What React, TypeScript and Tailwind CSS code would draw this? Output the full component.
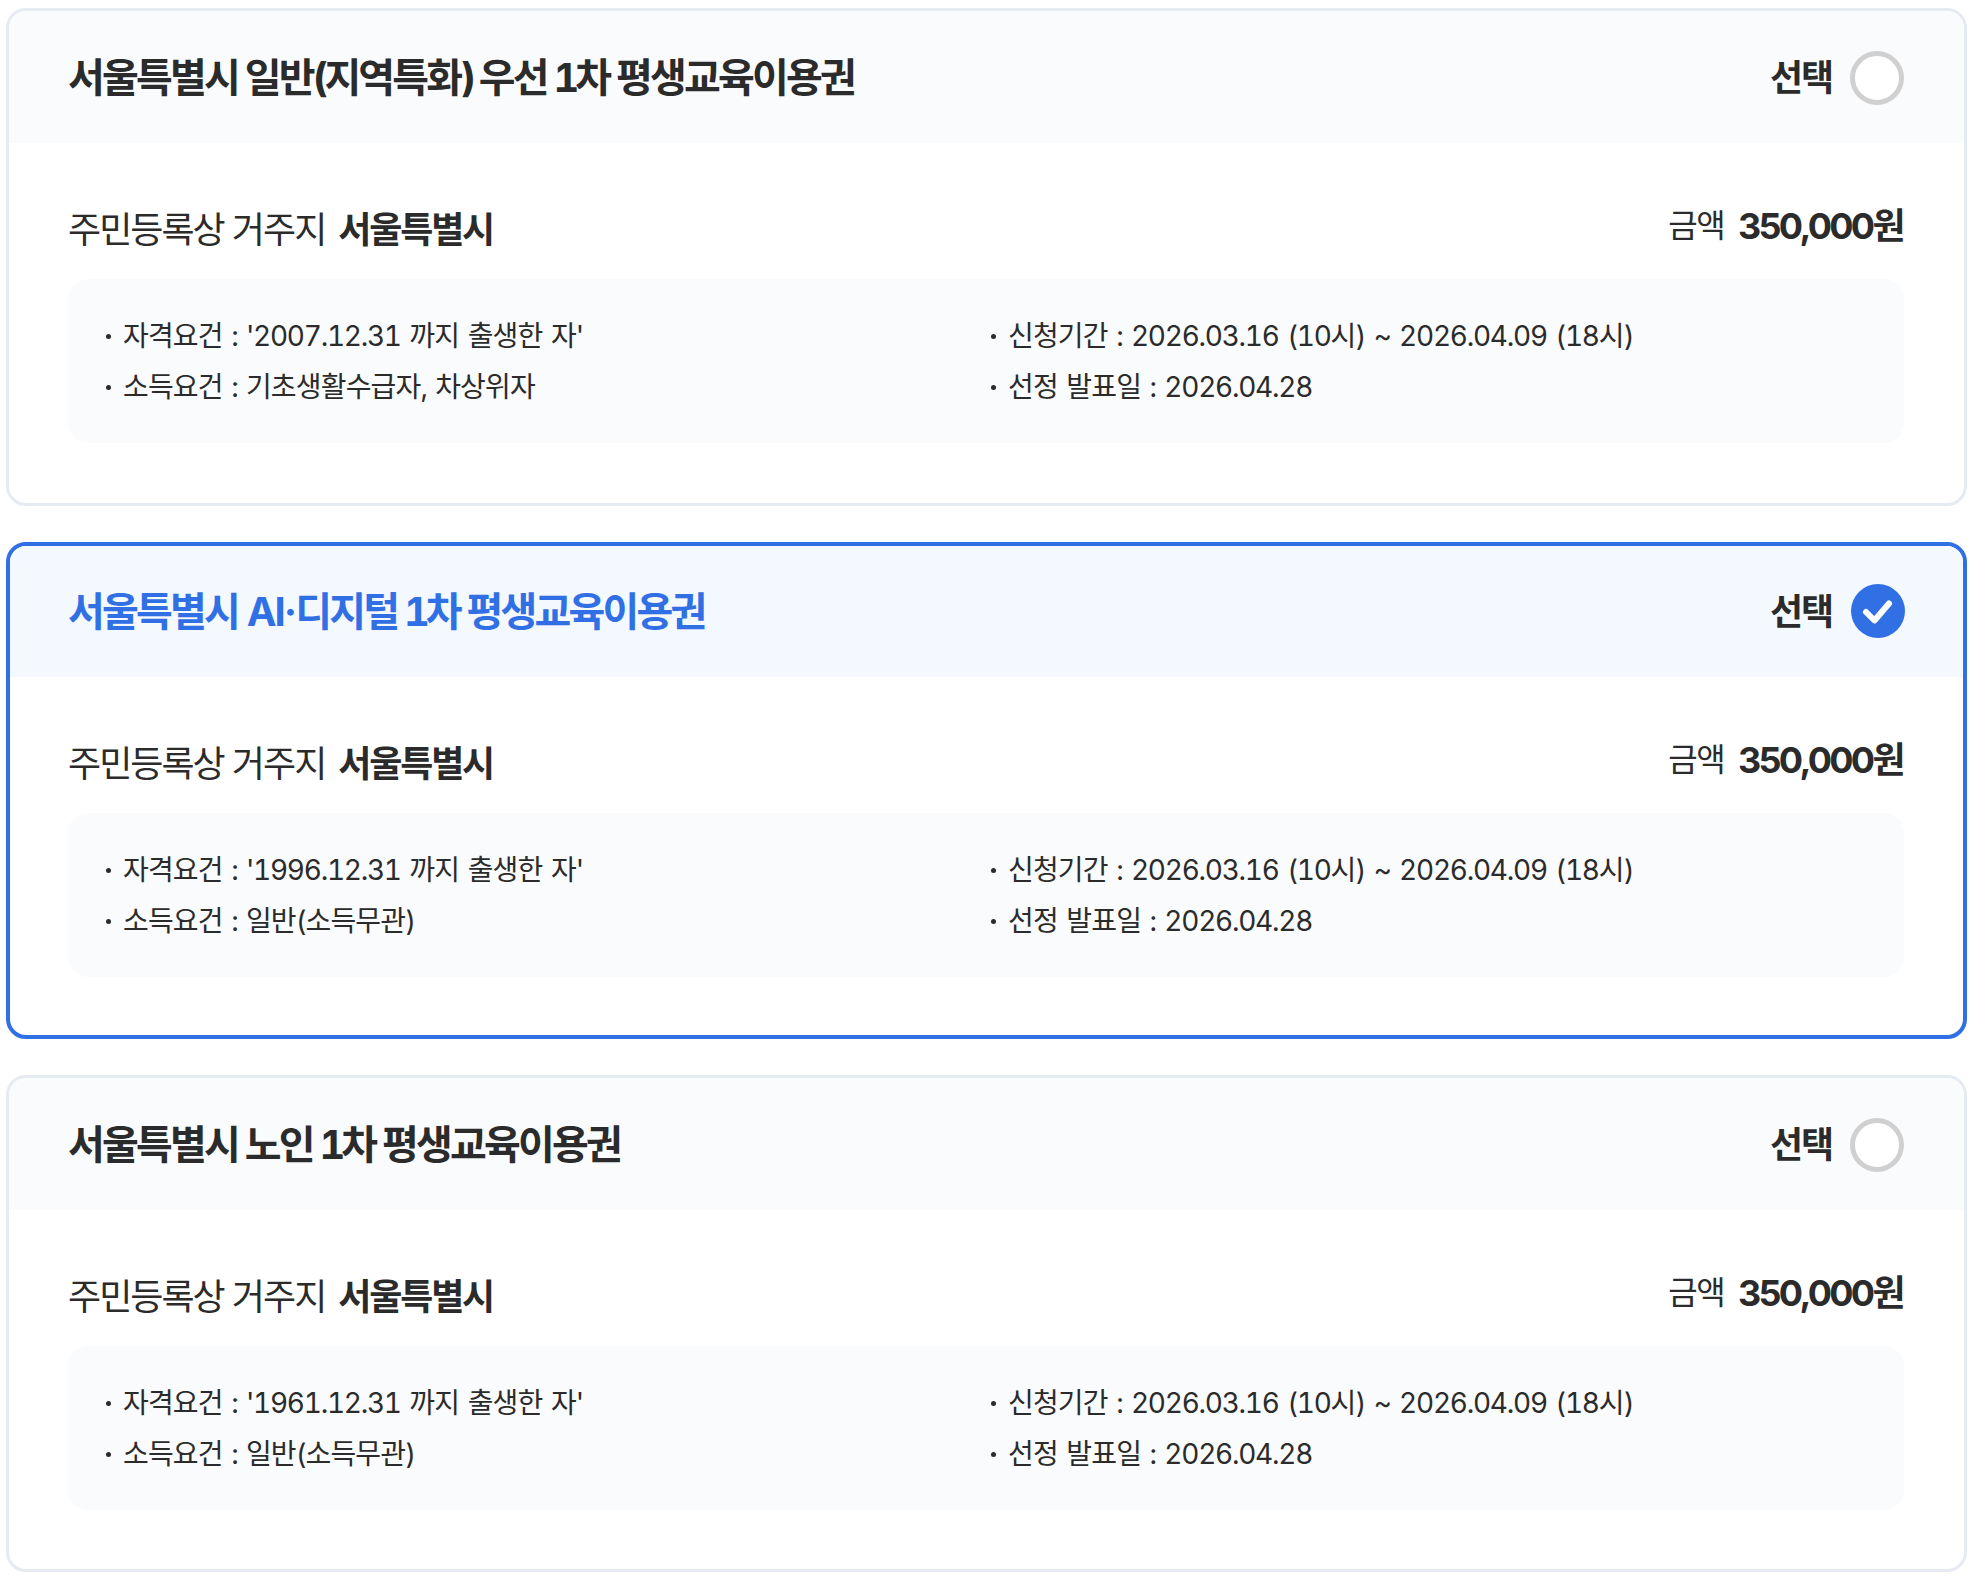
const font = "font-['Inter','Noto_Sans_CJK_KR',sans-serif]";

function Mixed({ text, hangul, latin }: { text: string; hangul: string; latin: string }) {
  const parts = text.split(/([\uac00-\ud7a3]+)/).filter(Boolean);
  return (
    <>
      {parts.map((p, i) => (
        <span key={i} className={/[\uac00-\ud7a3]/.test(p) ? hangul : p.includes("AI") ? "tracking-[-0.05em]" : latin}>
          {p}
        </span>
      ))}
    </>
  );
}

function Check() {
  return (
    <svg width="54" height="54" viewBox="0 0 54 54" className="shrink-0 translate-x-[1px] -translate-y-[1px]">
      <circle cx="27" cy="27" r="27" fill="#3070e4" />
      <path d="M15 28l8.5 8.5L38 19.5" fill="none" stroke="#fff" strokeWidth="6" strokeLinecap="round" strokeLinejoin="round" />
    </svg>
  );
}

function Line({ text }: { text: string }) {
  return (
    <div className="flex items-center whitespace-pre">
      <span className="w-[5px] h-[5px] rounded-full bg-[#2b2b2b] ml-[4px] mr-[12px]" />
      <span>
        <Mixed text={text} hangul="tracking-[-0.03em]" latin="tracking-[-0.045em] [word-spacing:0.08em]" />
      </span>
    </div>
  );
}

function Card({ title, birth, income, selected, tall }: { title: string; birth: string; income: string; selected?: boolean; tall?: boolean }) {
  return (
    <div className={`rounded-[20px] bg-white overflow-hidden ${tall ? "h-[498px]" : "h-[497px]"} ${selected ? "border-[4px] border-[#3070e4]" : "border-[3px] border-[#e6eaf1]"}`}>
      <div className={`flex items-center justify-between ${selected ? "h-[131px] pl-[58px] pr-[59px] bg-[#f4f8ff]" : "h-[132px] pt-[1px] pl-[59px] pr-[60px] bg-[#fafbfd]"}`}>
        <div className={`text-[40px] font-bold whitespace-pre tabular-nums ${selected ? "text-[#3070e4]" : "text-[#2b2b2b]"}`}>
          <Mixed text={title} hangul="tracking-[-0.07em]" latin="tracking-[-0.1em]" />
        </div>
        <div className="flex items-center gap-[18px]">
          <span className="text-[36px] font-bold tracking-[-0.06em] text-[#2b2b2b]">선택</span>
          {selected ? <Check /> : <div className="w-[54px] h-[54px] rounded-full border-[5px] border-[#d0d0d0] bg-white" />}
        </div>
      </div>
      <div className={selected ? "pl-[58px] pr-[59px] pt-[63px]" : "pl-[59px] pr-[60px] pt-[63px]"}>
        <div className="flex justify-between items-start h-[73px]">
          <div className="flex items-center gap-[13px] text-[36px] text-[#2b2b2b] leading-[48px]">
            <span className="tracking-[-0.055em]">주민등록상 거주지</span>
            <b className="font-bold tracking-[-0.06em]">서울특별시</b>
          </div>
          <div className="flex items-center gap-[14px] text-[#2b2b2b] leading-[44px] -mt-[2px] mr-[1px]">
            <span className="text-[32px] tracking-[-0.05em]">금액</span>
            <b className="font-bold text-[36px]">
              <Mixed text="350,000원" hangul="tracking-[-0.07em]" latin="tracking-[-0.075em]" />
            </b>
          </div>
        </div>
        <div className="bg-[#fafbfd] rounded-[20px] h-[164px] pt-[1px] px-[34px] grid grid-cols-[885px_1fr] content-center gap-y-[10px] text-[28px] leading-[41px] text-[#2b2b2b] tabular-nums">
          <Line text={`자격요건 : '${birth} 까지 출생한 자'`} />
          <Line text="신청기간 : 2026.03.16 (10시) ~ 2026.04.09 (18시)" />
          <Line text={`소득요건 : ${income}`} />
          <Line text="선정 발표일 : 2026.04.28" />
        </div>
      </div>
    </div>
  );
}

export default function App() {
  return (
    <div className={`${font} bg-white w-[1972px] h-[1580px] pt-[8px] pl-[6px] pr-[5px] flex flex-col gap-[36px]`}>
      <Card tall title="서울특별시 일반(지역특화) 우선 1차 평생교육이용권" birth="2007.12.31" income="기초생활수급자, 차상위자" />
      <Card title="서울특별시 AI·디지털 1차 평생교육이용권" birth="1996.12.31" income="일반(소득무관)" selected />
      <Card title="서울특별시 노인 1차 평생교육이용권" birth="1961.12.31" income="일반(소득무관)" />
    </div>
  );
}
